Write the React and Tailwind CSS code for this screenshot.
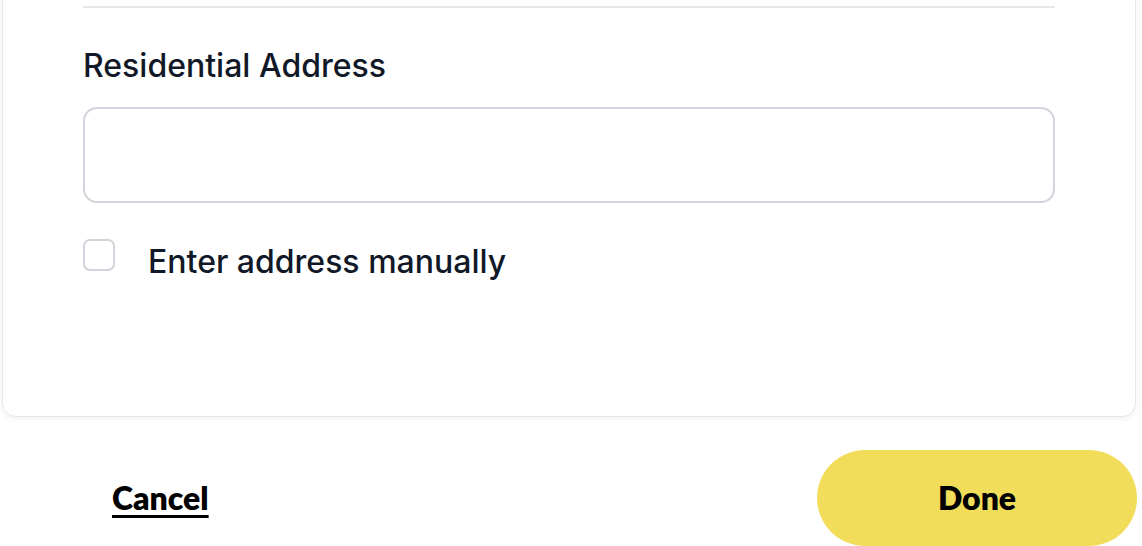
export default function App() {
  return (
    <div className="w-[1142px] h-[546px] overflow-hidden bg-white" style={{ fontFamily: "Inter, 'Noto Sans', sans-serif" }}>
      <div className="-mt-[20px] ml-[2px] w-[1134px] bg-white border border-[#e5e7eb] rounded-b-[14px] shadow-[0_2px_6px_rgba(0,0,0,0.06)] px-20 pt-[25px] pb-[134px]">
        <div className="h-[2px] bg-[#e5e7eb]" />
        <h2 className="mt-[38px] text-[32px] leading-[40px] font-medium text-[#111827]">Residential Address</h2>
        <div className="mt-[21px] h-[96px] rounded-[14px] border-2 border-[#d1d5db] bg-white" />
        <label className="mt-[36px] flex items-start gap-[33px]">
          <span className="w-[32px] h-[32px] rounded-[7px] border-2 border-[#d1d5db] bg-white" />
          <span className="mt-[3px] text-[32px] leading-[40px] font-medium text-[#111827]">Enter address manually</span>
        </label>
      </div>
      <div className="mt-[33px] flex items-center justify-between">
        <button className="ml-[112px] text-[32px] font-extrabold text-black underline underline-offset-[5px] decoration-[3px]" style={{ fontFamily: "Lato, 'Noto Sans', sans-serif" }}>
          Cancel
        </button>
        <button className="mr-[5px] w-[320px] h-[96px] rounded-full bg-[#f2dd5b] text-[32px] font-extrabold text-black" style={{ fontFamily: "Lato, 'Noto Sans', sans-serif" }}>
          Done
        </button>
      </div>
    </div>
  );
}
